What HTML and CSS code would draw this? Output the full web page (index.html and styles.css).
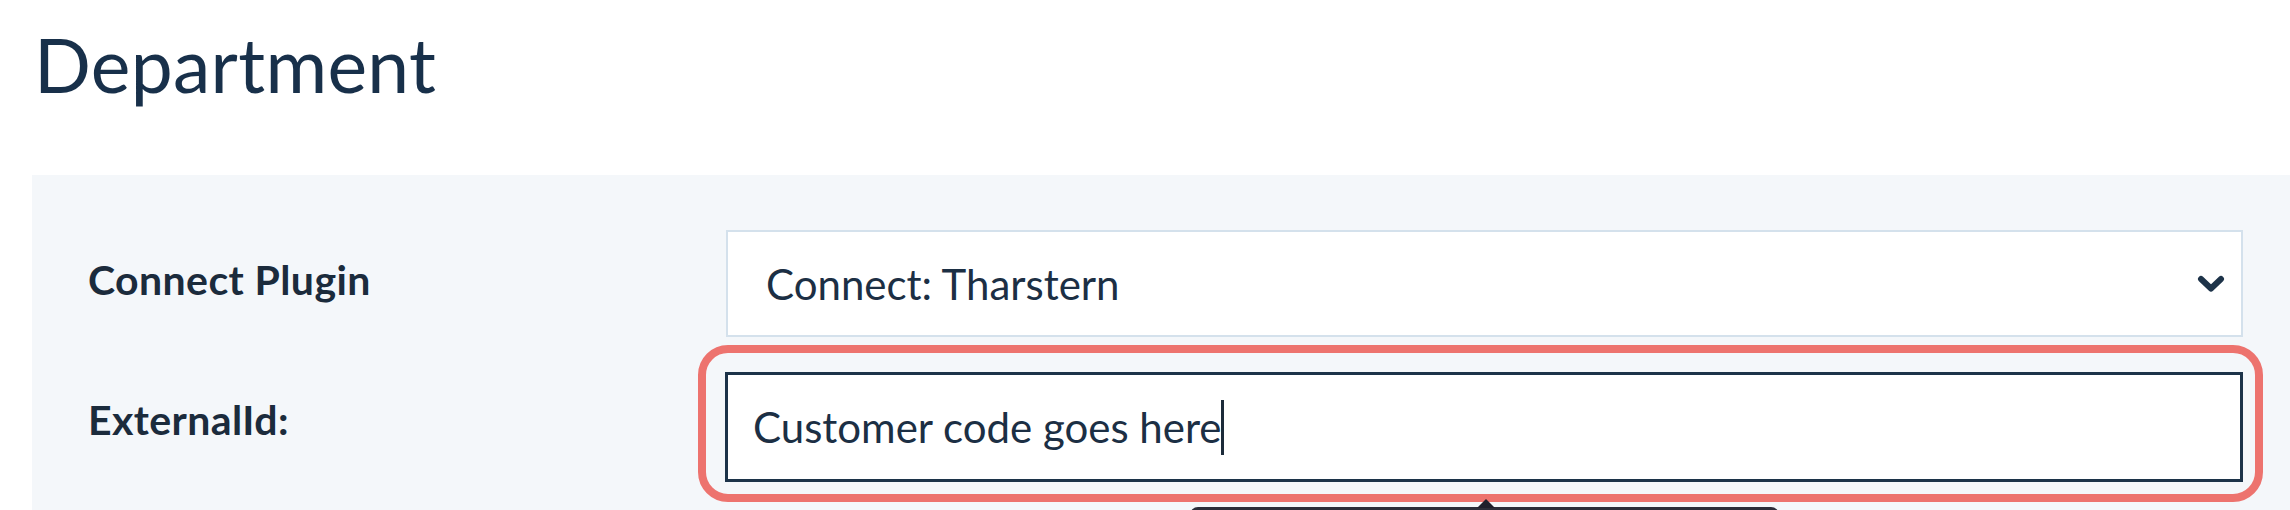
FILE: index.html
```html
<!DOCTYPE html>
<html lang="en">
<head>
  <meta charset="UTF-8">
  <meta name="viewport" content="width=device-width, initial-scale=1.0">
  <title>Department</title>
  <link rel="stylesheet" href="styles.css">
</head>
<body>
  <div class="page">
    <!-- Page title -->
    <h1 class="title">Department</h1>

    <!-- Settings panel -->
    <div class="panel">
      <div class="label">Connect Plugin</div>
      <div class="select">
        <span>Connect: Tharstern</span>
        <svg class="chevron" viewBox="0 0 28 18" width="28" height="18">
          <path d="M4 4 L14 13.5 L24 4" fill="none" stroke="#1d3349" stroke-width="6" stroke-linecap="round" stroke-linejoin="round"/>
        </svg>
      </div>

      <div class="label">ExternalId:</div>
      <div class="highlight">
        <div class="text-input">Customer code goes here<span class="caret"></span></div>
        <!-- Tooltip under the field -->
        <div class="tooltip"></div>
      </div>
    </div>
  </div>
</body>
</html>
```

FILE: styles.css
```css
/* Base */
body {
  font-family: 'Lato', 'Open Sans', sans-serif;
  margin: 0;
  padding: 0;
  background-color: white;
  color: #1a2f46;
  height: 510px;
  overflow: hidden;
}

.page {
  padding-left: 32px;
}

/* Title */
.title {
  font-size: 75px;
  font-weight: 400;
  line-height: 74px;
  letter-spacing: 0.3px;
  margin: 27px 0 74px;
  padding-left: 2px;
  color: #18304a;
}

/* Panel with the form */
.panel {
  background-color: #f4f7fa;
  padding: 55px 47px 0 56px;
  min-height: 335px;
  box-sizing: border-box;
  display: grid;
  grid-template-columns: 638px 1fr;
  align-content: start;
  align-items: center;
  row-gap: 8px;
}

.label {
  font-size: 41px;
  font-weight: 700;
  letter-spacing: 0.4px;
  color: #1b2b3c;
  padding-bottom: 8px;
}

/* Dropdown */
.select {
  height: 107px;
  box-sizing: border-box;
  border: 2px solid #d4e1ec;
  background-color: white;
  display: flex;
  align-items: center;
  justify-content: space-between;
  padding: 0 16px 0 38px;
  font-size: 42px;
  color: #1c2f44;
}

.chevron {
  display: block;
}

/* Red annotation ring */
.highlight {
  position: relative;
  margin: 0 -20px 0 -28px;
  border: 8px solid #ed736e;
  border-radius: 30px;
  padding: 19px 12px 12px 19px;
}

.text-input {
  height: 110px;
  box-sizing: border-box;
  border: 3px solid #1c3349;
  background-color: white;
  display: flex;
  align-items: center;
  padding-left: 25px;
  font-size: 42px;
  color: #1c2f44;
}

.caret {
  display: inline-block;
  width: 3px;
  height: 55px;
  margin-left: -1px;
  background-color: #1c2b3a;
}

/* Tooltip peeking from the bottom */
.tooltip {
  position: absolute;
  left: 484px;
  top: 154px;
  width: 589px;
  height: 60px;
  background-color: #2c2d39;
  border-radius: 8px;
}

.tooltip::before {
  content: '';
  position: absolute;
  left: 287px;
  top: -8px;
  border-left: 9px solid transparent;
  border-right: 9px solid transparent;
  border-bottom: 9px solid #1f1f2b;
}
```
